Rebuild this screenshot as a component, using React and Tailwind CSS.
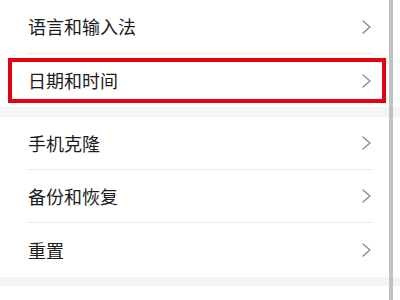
import React from "react";

function Chevron() {
  return (
    <svg width="9" height="14" viewBox="0 0 9 14" fill="none" className="flex-shrink-0">
      <path d="M1 1 L8 7 L1 13" stroke="#8a8a8a" strokeWidth="1.3" strokeLinecap="round" strokeLinejoin="round" />
    </svg>
  );
}

function Row({ label, divider = true, height = "h-[53px]" }) {
  return (
    <div className={`mx-[27px] ${height} flex items-center justify-between pr-[2px] ${divider ? "border-b border-[#ebebeb]" : ""}`}>
      <span className="text-[18px] text-[#1c1c1c] pl-[1px]">{label}</span>
      <Chevron />
    </div>
  );
}

export default function App() {
  return (
    <div className="relative w-[400px] h-[300px] overflow-hidden bg-white font-['Noto_Sans_CJK_SC','Noto_Sans',sans-serif]">
      {/* group 1 */}
      <Row label="语言和输入法" height="h-[54px]" />
      <div className="relative">
        <Row label="日期和时间" divider={false} />
        {/* highlight box */}
        <div className="absolute left-[8px] right-[14px] top-[4px] bottom-[4px] border-4 border-[#e3000f]" />
      </div>

      <div className="h-[10px] bg-[#f4f4f4]" />

      {/* group 2 */}
      <Row label="手机克隆" />
      <Row label="备份和恢复" />
      <Row label="重置" divider={false} height="h-[54px]" />

      <div className="h-[9px] bg-[#f4f4f4]" />

      {/* scrollbar */}
      <div className="absolute top-0 bottom-0 right-[7px] w-[4px] bg-[#c2c2c2]" />
    </div>
  );
}
